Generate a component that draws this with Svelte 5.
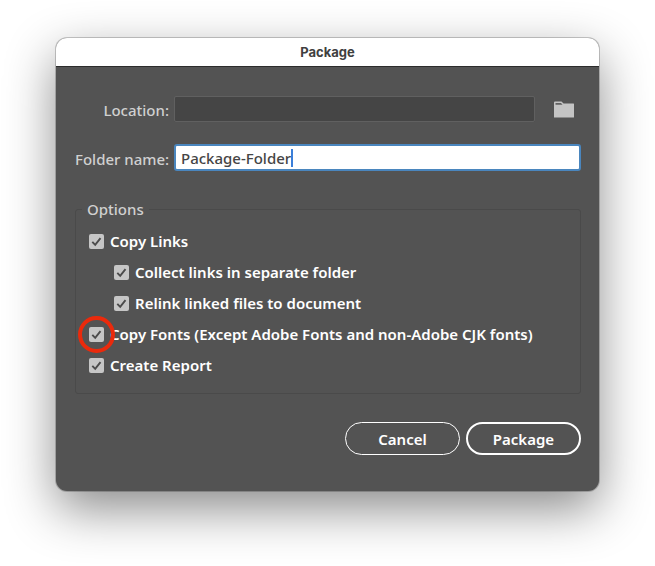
<script>
    let location = $state('');
    let folderName = $state('Package-Folder');

    let options = $state([
        { id: 'copy-links', label: 'Copy Links', checked: true },
        { id: 'collect-links', label: 'Collect links in separate folder', checked: true, nested: true },
        { id: 'relink-files', label: 'Relink linked files to document', checked: true, nested: true },
        { id: 'copy-fonts', label: 'Copy Fonts (Except Adobe Fonts and non-Adobe CJK fonts)', checked: true, marked: true },
        { id: 'create-report', label: 'Create Report', checked: true }
    ]);
</script>

<main>
    <form class="dialog" onsubmit={(e) => e.preventDefault()}>
        <h1>Package</h1>

        <div class="content">
            <div class="fields">
                <label for="location">Location:</label>
                <div class="location-row">
                    <input id="location" class="location" type="text" bind:value={location} readonly />
                    <button class="browse" type="button" aria-label="Choose folder">
                        <svg viewBox="0 0 20 17" width="20" height="17">
                            <path d="M0 16.5V1.5Q0 .5 1 .5H7.5L9.5 2.5H19.5Q20 2.5 20 3V16Q20 16.5 19.5 16.5Z" fill="#c4c4c4" />
                            <path d="M1.5 2H7L8.5 3.7H1.5Z" fill="#606060" />
                        </svg>
                    </button>
                </div>

                <label for="folder-name">Folder name:</label>
                <div class="folder-box">
                    <input id="folder-name" type="text" bind:value={folderName} />
                    <span class="caret"></span>
                </div>
            </div>

            <fieldset>
                <legend>Options</legend>
                {#each options as option (option.id)}
                    <label class="option" class:nested={option.nested}>
                        <span class="check">
                            <input type="checkbox" bind:checked={option.checked} />
                            {#if option.checked}
                                <svg class="tick" viewBox="0 0 15 15" width="15" height="15">
                                    <path d="M3.3 7.8L6.2 10.8L11.5 4.2" fill="none" stroke="#4b4b4b" stroke-width="1.9" />
                                </svg>
                            {/if}
                            {#if option.marked}
                                <span class="ring"></span>
                            {/if}
                        </span>
                        {option.label}
                    </label>
                {/each}
            </fieldset>

            <div class="actions">
                <button class="btn" type="button">Cancel</button>
                <button class="btn btn-default" type="submit">Package</button>
            </div>
        </div>
    </form>
</main>

<style>
    :global(body) {
        background: #fff;
    }

    main {
        padding: 38px 56px 74px;
        font-family: "Noto Sans", "Open Sans", sans-serif;
        font-size: 15px;
        line-height: 20px;
        color: #fff;
    }

    .dialog {
        overflow: hidden;
        border-radius: 11px;
        background: #535353;
        box-shadow: 0 0 0 1px rgba(0, 0, 0, 0.2), 0 18px 50px rgba(0, 0, 0, 0.46);
    }

    h1 {
        margin: 0;
        background: #fff;
        border-bottom: 1px solid #2c2c2c;
        color: #404040;
        font-family: Inter, sans-serif;
        font-size: 13px;
        font-weight: 700;
        line-height: 28px;
        text-align: center;
    }

    .content {
        padding: 29px 18px 36px 19px;
    }

    .fields {
        display: grid;
        grid-template-columns: 94px 1fr;
        column-gap: 5px;
        row-gap: 22px;
        align-items: center;
        color: #d0d0d0;
    }

    .fields label {
        padding-top: 2px;
        font-weight: 500;
        text-align: right;
        white-space: nowrap;
    }

    .location-row {
        display: flex;
        align-items: center;
    }

    input,
    button {
        font: inherit;
        margin: 0;
    }

    .location {
        box-sizing: border-box;
        flex: 1;
        min-width: 0;
        height: 26px;
        padding: 0 6px;
        border: 1px solid #606060;
        border-radius: 2px;
        background: #454545;
        color: #d0d0d0;
        outline: none;
    }

    .browse {
        display: flex;
        margin: 0 7px 0 19px;
        padding: 0;
        border: none;
        background: none;
    }

    .folder-box {
        display: flex;
        align-items: center;
        box-sizing: border-box;
        height: 27px;
        padding-left: 5px;
        border: 2px solid #4a86be;
        border-radius: 3px;
        background: #fff;
    }

    .folder-box input {
        field-sizing: content;
        padding: 0;
        border: none;
        background: none;
        color: #454545;
        font-weight: 500;
        caret-color: transparent;
        outline: none;
    }

    .caret {
        width: 2px;
        height: 18px;
        background: #3b7fd9;
    }

    fieldset {
        display: flex;
        flex-direction: column;
        gap: 11px;
        min-width: 0;
        margin: 28px 0 0;
        padding: 12px 13px 18px;
        border: 1px solid #4a4a4a;
        border-radius: 3px;
    }

    legend {
        margin-left: -7px;
        padding: 0 5px;
        color: #d0d0d0;
        font-weight: 500;
    }

    .option {
        display: flex;
        align-items: center;
        gap: 6px;
        font-weight: 600;
    }

    .nested {
        margin-left: 25px;
    }

    .check {
        position: relative;
        display: flex;
        flex: none;
    }

    .check input {
        appearance: none;
        width: 15px;
        height: 15px;
        border-radius: 2px;
        background: #c6c6c6;
    }

    .tick {
        position: absolute;
        inset: 0;
        pointer-events: none;
    }

    .ring {
        position: absolute;
        inset: -11px;
        border: 4px solid #ea2a0c;
        border-radius: 50%;
        pointer-events: none;
    }

    .actions {
        display: flex;
        justify-content: flex-end;
        gap: 6px;
        margin-top: 28px;
    }

    .btn {
        box-sizing: border-box;
        width: 115px;
        height: 33px;
        padding: 0;
        border: 1px solid #fff;
        border-radius: 17px;
        background: none;
        color: #fff;
        font-weight: 600;
    }

    .btn-default {
        border-width: 2px;
    }
</style>
